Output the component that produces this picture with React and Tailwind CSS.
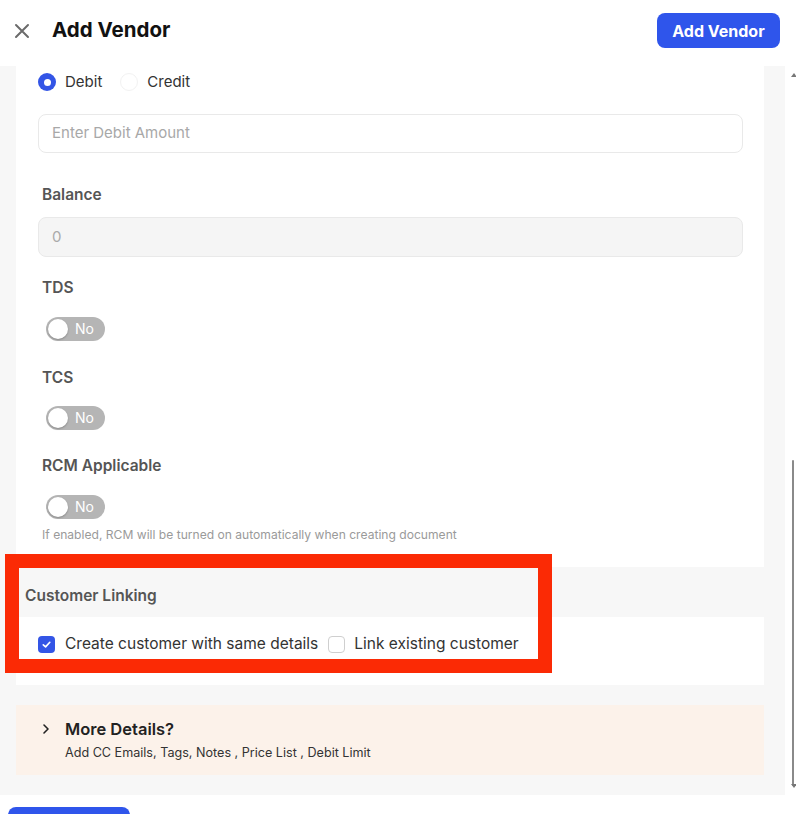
import React from "react";

function Toggle() {
  return (
    <div className="flex items-center w-[59px] h-[24px] rounded-full bg-[#b5b5b5] p-[2px]">
      <div className="w-[20px] h-[20px] rounded-full bg-white shadow-[0_1px_2px_rgba(0,0,0,0.25)]"></div>
      <span className="ml-[7px] text-[14px] leading-none text-white">No</span>
    </div>
  );
}

function Label({ children }) {
  return (
    <div className="pl-[4px] h-[20px] flex items-center text-[15.5px] font-semibold text-[#555]">{children}</div>
  );
}

export default function App() {
  return (
    <div className="w-[796px] h-[814px] overflow-hidden bg-white relative" style={{ fontFamily: "Inter, 'Noto Sans', sans-serif" }}>
      {/* Header */}
      <div className="h-[66px] flex items-start justify-between pl-[14px] pr-[16px] pt-[13px]">
        <div className="flex items-center h-[35px]">
          <svg width="16" height="16" viewBox="0 0 16 16">
            <path d="M2 2 L14 14 M14 2 L2 14" stroke="#6b6b6b" strokeWidth="2" strokeLinecap="round" />
          </svg>
          <div className="ml-[22px] text-[20.5px] font-bold text-[#111]">Add Vendor</div>
        </div>
        <button className="w-[123px] h-[35px] rounded-lg bg-[#2f55eb] text-white text-[16px] font-bold">
          Add Vendor
        </button>
      </div>

      {/* Body */}
      <div className="flex h-[729px]">
        <div className="w-[785px] bg-[#f7f7f7] pl-[16px] pr-[21px]">
          {/* White card */}
          <div className="bg-white h-[501px] pt-[7px] pl-[22px] pr-[21px]">
            <div className="flex items-center h-[18px]">
              <div className="w-[18px] h-[18px] rounded-full bg-[#3355e6] flex items-center justify-center">
                <div className="w-[7px] h-[7px] rounded-full bg-white"></div>
              </div>
              <span className="ml-[9px] text-[15px] text-[#333]">Debit</span>
              <div className="ml-[18px] w-[18px] h-[18px] rounded-full bg-white border border-[#f2f2f2]"></div>
              <span className="ml-[9px] text-[15px] text-[#333]">Credit</span>
            </div>
            <div className="mt-[23px] h-[39px] rounded-lg border border-[#e9e9e9] flex items-center pl-[13px] text-[15px] text-[#a8a8a8]">
              Enter Debit Amount
            </div>
            <div className="mt-[32px]"><Label>Balance</Label></div>
            <div className="mt-[12px] h-[40px] rounded-lg border border-[#e9e9e9] bg-[#f5f5f5] flex items-center pl-[13px] text-[15px] text-[#aaa]">
              0
            </div>
            <div className="mt-[21px]"><Label>TDS</Label></div>
            <div className="mt-[19px] pl-[8px]"><Toggle /></div>
            <div className="mt-[27px]"><Label>TCS</Label></div>
            <div className="mt-[18px] pl-[8px]"><Toggle /></div>
            <div className="mt-[26px]"><Label>RCM Applicable</Label></div>
            <div className="mt-[19px] pl-[8px]"><Toggle /></div>
            <div className="mt-[8px] pl-[4px] text-[12.1px] leading-[16px] text-[#9a9a9a]">
              If enabled, RCM will be turned on automatically when creating document
            </div>
          </div>

          {/* Customer linking */}
          <div className="h-[50px] pl-[9px] pt-[19px]">
            <div className="h-[20px] flex items-center text-[15.5px] font-semibold text-[#555]">Customer Linking</div>
          </div>
          <div className="bg-white h-[68px] pl-[22px] pt-[18px]">
            <div className="flex items-center h-[18px]">
              <div className="w-[17px] h-[17px] rounded-[4px] bg-[#3355e6] flex items-center justify-center">
                <svg width="11" height="11" viewBox="0 0 12 12">
                  <path d="M2.5 6.3 L5 8.6 L9.6 3.6" stroke="white" strokeWidth="1.8" fill="none" strokeLinecap="round" strokeLinejoin="round" />
                </svg>
              </div>
              <span className="ml-[10px] text-[15.5px] text-[#333]">Create customer with same details</span>
              <div className="ml-[10px] w-[17px] h-[17px] rounded-[4px] bg-white border border-[#cfcfcf]"></div>
              <span className="ml-[9px] text-[15.5px] text-[#333]">Link existing customer</span>
            </div>
          </div>

          {/* More details */}
          <div className="mt-[20px] h-[70px] bg-[#fcf2ea] pl-[24px] pt-[14px]">
            <div className="flex items-center h-[20px]">
              <svg width="12" height="12" viewBox="0 0 12 12">
                <path d="M4 2 L8 6 L4 10" stroke="#222" strokeWidth="1.6" fill="none" strokeLinecap="round" strokeLinejoin="round" />
              </svg>
              <span className="ml-[13px] text-[16.5px] font-semibold text-[#222]">More Details?</span>
            </div>
            <div className="mt-[5px] pl-[25px] text-[12.6px] leading-[17px] text-[#333]">
              Add CC Emails, Tags, Notes , Price List , Debit Limit
            </div>
          </div>
        </div>

        {/* Scrollbar */}
        <div className="w-[11px] bg-white relative">
          <div className="absolute left-[6px] top-[7px] w-0 h-0 border-l-[3px] border-r-[3px] border-b-[4px] border-l-transparent border-r-transparent border-b-[#777]"></div>
          <div className="absolute left-[7px] top-[394px] w-[2px] h-[326px] bg-[#8a8a8a] rounded"></div>
          <div className="absolute left-[6px] bottom-[7px] w-0 h-0 border-l-[3px] border-r-[3px] border-t-[4px] border-l-transparent border-r-transparent border-t-[#777]"></div>
        </div>
      </div>

      {/* Footer */}
      <div className="h-[19px] pl-[8px] pt-[12px]">
        <div className="w-[122px] h-[20px] rounded-t-lg bg-[#2f55eb]"></div>
      </div>

      {/* Red highlight annotation */}
      <div className="absolute left-[5px] top-[554px] w-[547px] h-[119px] border-[14px] border-[#fb2a05] pointer-events-none"></div>
    </div>
  );
}
